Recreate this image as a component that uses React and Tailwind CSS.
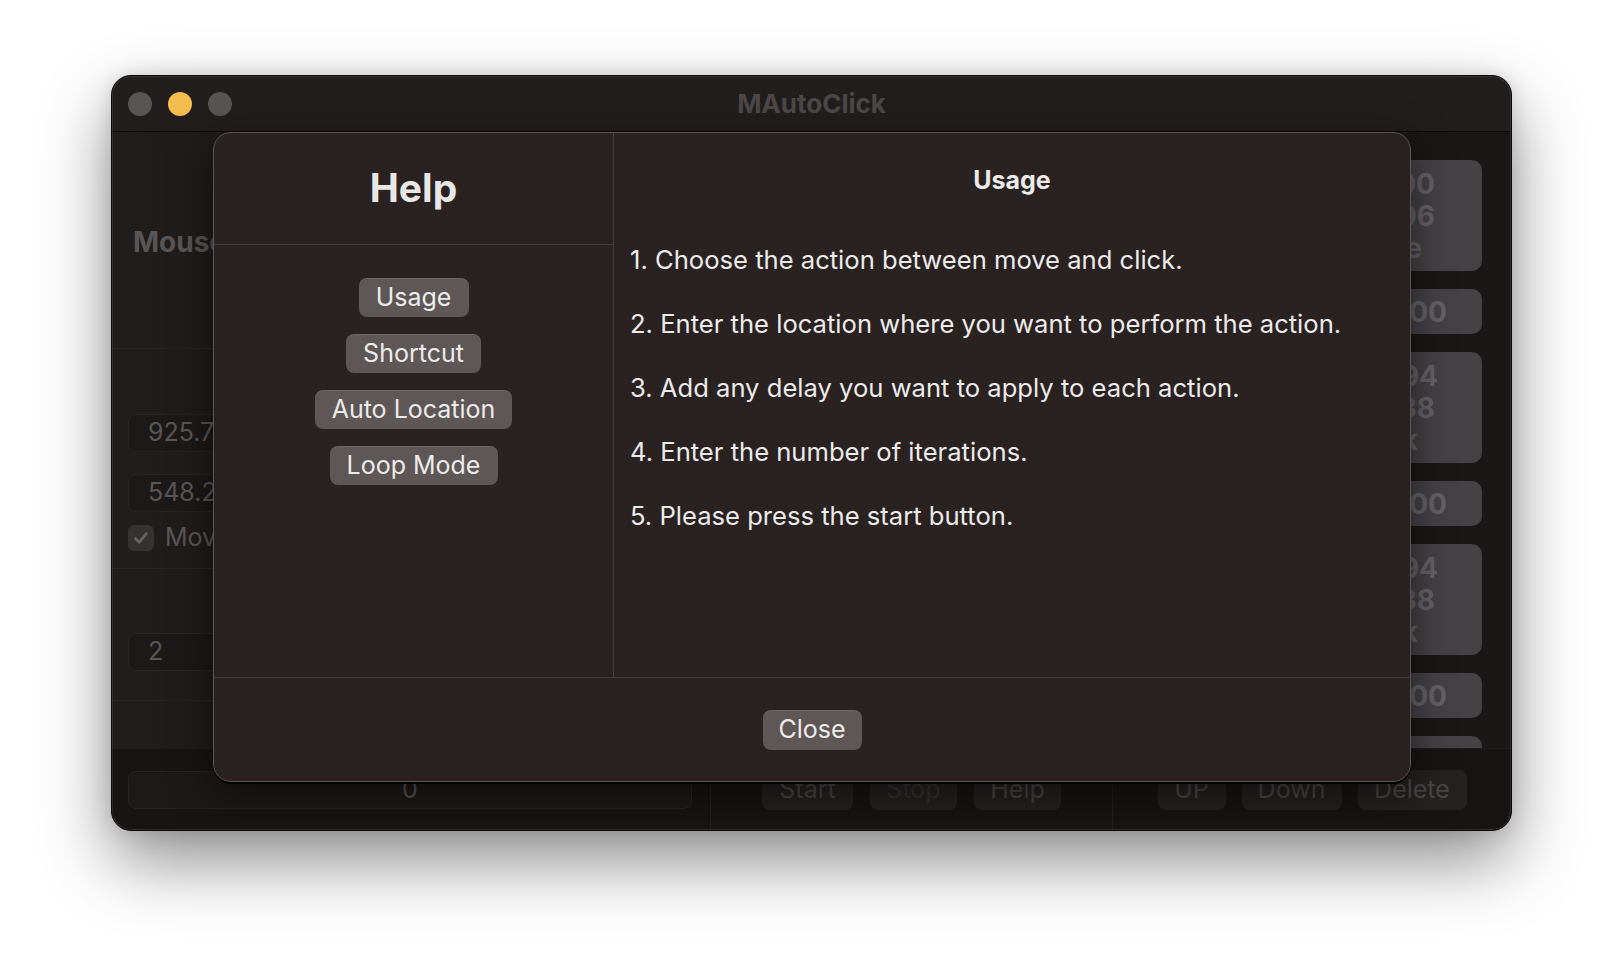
import { useState } from 'react';

const helpTopics = ['Usage', 'Shortcut', 'Auto Location', 'Loop Mode'];
const topicWidths = {
  Usage: 'w-[110px]',
  Shortcut: 'w-[135px]',
  'Auto Location': 'w-[197px]',
  'Loop Mode': 'w-[168px]',
};

const usageSteps = [
  '1. Choose the action between move and click.',
  '2. Enter the location where you want to perform the action.',
  '3. Add any delay you want to apply to each action.',
  '4. Enter the number of iterations.',
  '5. Please press the start button.',
];

// background list cards, each line is pushed so the visible tail lines up with the picture
const actionCards = [
  { tall: true, lines: [['925.700', 'pr-[47px]'], ['548.206', 'pr-[47px]'], ['Move', 'pr-[60px]']] },
  { tall: false, lines: [['1.000', 'pr-[35px]']] },
  { tall: true, lines: [['1203.594', 'pr-[44px]'], ['412.738', 'pr-[47px]'], ['Click', 'pr-[64px]']] },
  { tall: false, lines: [['1.000', 'pr-[35px]']] },
  { tall: true, lines: [['1203.594', 'pr-[44px]'], ['412.738', 'pr-[47px]'], ['Click', 'pr-[64px]']] },
  { tall: false, lines: [['1.000', 'pr-[35px]']] },
  { tall: true, lines: [] },
];

function TitleBar() {
  return (
    <div className="relative flex h-[56px] shrink-0 items-center border-b border-[#0c0a0a] bg-[#221e1e] pl-[16px]">
      <div className="flex items-center gap-[16px]">
        <span className="size-[24px] rounded-full bg-[#5a5555]" />
        <span className="size-[24px] rounded-full bg-[#f2bd4d]" />
        <span className="size-[24px] rounded-full bg-[#5a5555]" />
      </div>
      <div className="pointer-events-none absolute inset-x-0 top-0 flex h-full items-center justify-center text-[26px] font-bold text-[#4d4848]">
        MAutoClick
      </div>
    </div>
  );
}

function DimField({ value, center }) {
  return (
    <div
      className={`flex h-[38px] w-[564px] items-center rounded-[8px] border border-[#292424] bg-[#1d1919] text-[25px] text-[#5b5656] ${
        center ? 'justify-center' : 'pl-[19px]'
      }`}
    >
      {value}
    </div>
  );
}

function LeftPanel() {
  return (
    <div className="flex w-[599px] shrink-0 flex-col border-r border-[#241f1f] bg-gradient-to-r from-[#221d1d] to-[#1a1616]">
      <div className="flex h-[217px] items-center border-b border-[#2a2525] pl-[21px] pt-[3px] text-[28px] font-bold text-[#5a5555]">
        Mouse Position
      </div>
      <div className="flex h-[220px] flex-col border-b border-[#2a2525] pl-[16px] pt-[65px]">
        <DimField value="925.70703125" />
        <div className="h-[22px]" />
        <DimField value="548.20703125" />
        <div className="mt-[7px] flex items-center gap-[11px]">
          <span className="grid size-[26px] place-items-center rounded-[6px] bg-[#363232]">
            <svg width="18" height="18" viewBox="0 0 18 18" fill="none">
              <path d="M3.5 9.5l3.6 3.8L14.5 4.5" stroke="#6a6565" strokeWidth="2.6" strokeLinecap="round" strokeLinejoin="round" />
            </svg>
          </span>
          <span className="text-[25px] text-[#5b5656]">Move the mouse</span>
        </div>
      </div>
      <div className="flex h-[132px] flex-col border-b border-[#2a2525] pl-[16px] pt-[64px]">
        <DimField value="2" />
      </div>
      <div className="flex-1" />
    </div>
  );
}

function ActionList() {
  return (
    <div className="flex flex-1 flex-col gap-[18px] overflow-hidden bg-[#1b1717] pl-[28px] pr-[29px] pt-[28px]">
      {actionCards.map((card, i) => (
        <div
          key={i}
          className={`flex shrink-0 flex-col rounded-[10px] bg-[#454246] text-[28px] font-bold leading-[32px] text-[#656266] ${
            card.tall ? 'h-[111px] pt-[8px]' : 'h-[45px] justify-center'
          }`}
        >
          {card.lines.map(([text, pad]) => (
            <div key={text} className={`text-right ${pad}`}>
              {text}
            </div>
          ))}
        </div>
      ))}
    </div>
  );
}

function DimButton({ label, width, faded }) {
  return (
    <div
      className={`grid h-[40px] place-items-center rounded-[8px] bg-[#252121] text-[25px] ${width} ${
        faded ? 'text-[#363131]' : 'text-[#4b4646]'
      }`}
    >
      {label}
    </div>
  );
}

function BottomBar() {
  return (
    <div className="flex h-[82px] shrink-0 border-t border-[#211d1d] bg-[#181414]">
      <div className="flex w-[599px] items-center border-r border-[#241f1f] pl-[16px]">
        <DimField value="0" center />
      </div>
      <div className="flex w-[402px] items-center justify-center gap-[17px] border-r border-[#241f1f]">
        <DimButton label="Start" width="w-[91px]" />
        <DimButton label="Stop" width="w-[87px]" faded />
        <DimButton label="Help" width="w-[87px]" />
      </div>
      <div className="flex flex-1 items-center justify-center gap-[16px]">
        <DimButton label="UP" width="w-[68px]" />
        <DimButton label="Down" width="w-[100px]" />
        <DimButton label="Delete" width="w-[109px]" />
      </div>
    </div>
  );
}

function HelpSheet() {
  const [topic, setTopic] = useState('Usage');

  return (
    <div className="absolute left-[101px] top-[56px] flex h-[650px] w-[1198px] flex-col rounded-[18px] border border-[#5c5555] bg-[#2a2221] shadow-[0_2px_0_rgba(0,0,0,0.9),0_12px_40px_rgba(0,0,0,0.55)]">
      <div className="flex flex-1">
        <div className="flex w-[400px] shrink-0 flex-col border-r border-[#443c3b]">
          <div className="flex h-[112px] items-center justify-center border-b border-[#443c3b] text-[39px] font-bold text-[#e9e6e6]">
            Help
          </div>
          <div className="flex flex-col items-center gap-[17px] pt-[33px]">
            {helpTopics.map((t) => (
              <button
                key={t}
                type="button"
                onClick={() => setTopic(t)}
                className={`grid h-[39px] place-items-center rounded-[8px] bg-[#5e5756] text-[25px] text-[#ecebeb] shadow-[inset_0_1px_0_rgba(255,255,255,0.08)] ${topicWidths[t]}`}
              >
                {t}
              </button>
            ))}
          </div>
        </div>
        <div className="flex flex-1 flex-col pt-[31px]">
          <div className="text-center text-[25px] font-bold leading-[32px] text-[#ecebeb]">{topic}</div>
          <div className="mt-[48px] flex flex-col gap-[32px] pl-[16px] text-[25.6px] leading-[32px] text-[#ecebeb]">
            {usageSteps.map((step) => (
              <div key={step}>{step}</div>
            ))}
          </div>
        </div>
      </div>
      <div className="flex h-[104px] shrink-0 items-center justify-center border-t border-[#443c3b]">
        <button
          type="button"
          className="grid h-[40px] w-[99px] place-items-center rounded-[8px] bg-[#5e5756] text-[25px] text-[#ecebeb] shadow-[inset_0_1px_0_rgba(255,255,255,0.08)]"
        >
          Close
        </button>
      </div>
    </div>
  );
}

export default function App() {
  return (
    <div className="h-[980px] w-[1624px] bg-white pl-[111px] pt-[75px] font-['Inter','Liberation_Sans',sans-serif]">
      <div className="relative flex h-[756px] w-[1401px] flex-col overflow-hidden rounded-[20px] border border-[#0a0909] bg-[#1c1818] shadow-[0_30px_70px_rgba(0,0,0,0.45),0_0_20px_rgba(0,0,0,0.12)]">
        <TitleBar />
        <div className="flex h-[616px] shrink-0">
          <LeftPanel />
          <ActionList />
        </div>
        <BottomBar />
        <HelpSheet />
        <div className="pointer-events-none absolute inset-0 rounded-[19px] shadow-[inset_0_0_0_1px_rgba(255,255,255,0.1)]" />
      </div>
    </div>
  );
}
